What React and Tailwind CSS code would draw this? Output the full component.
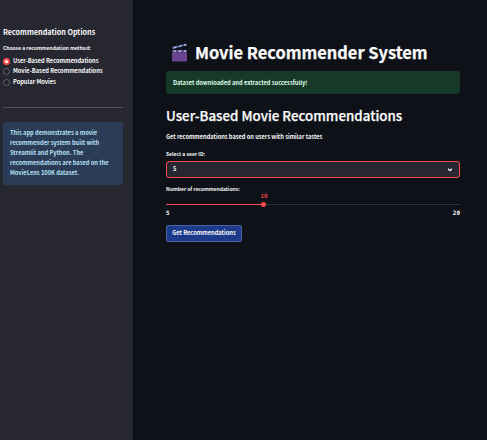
const methods = ["User-Based Recommendations", "Movie-Based Recommendations", "Popular Movies"];

function Clapper() {
  return (
    <svg viewBox="0 0 18 20" className="ml-[5px] h-5 w-[18px] shrink-0">
      <rect x="1" y="7" width="15" height="11.5" fill="#6b4592" />
      <path d="M1 7h15v3H1z" fill="#493e70" />
      <path d="M2.5 7.3h3.2l-1 1.6H2.5zM7.5 7.3h3.5l-1 1.6H7zM13 7.3h2.5l-.5 1.6h-2.5z" fill="#a9a9ec" />
      <path d="M1 3.8 15 .6l.6 2L1.4 6z" fill="#414c74" />
      <path d="m2.5 4.1 3.7-1-1 1.8-3.2.8zM8.4 2.6l3.1-.8-1 1.8-3.3.8zM13.2 1.2 15 .8l.5 1.6-2.8.6z" fill="#a9b2e6" />
    </svg>
  );
}

export default function App() {
  return (
    <div className="flex h-[440px] w-[487px] overflow-hidden bg-[#0e1117] font-['Noto_Sans_CJK_SC','Noto_Sans',sans-serif] text-[5.7px] font-bold text-[#fafafa]">
      <aside className="w-[133px] shrink-0 bg-[#262730] pl-[3px] pr-[10px] pt-[26px]">
        <h2 className="whitespace-nowrap text-[7.2px] font-bold leading-[12px]">Recommendation Options</h2>
        <p className="mt-[5px] whitespace-nowrap text-[5px] leading-[10px]">Choose a recommendation method:</p>
        <div className="mt-[3px] flex flex-col">
          {methods.map((m, i) => (
            <label key={m} className="flex h-[10.5px] items-center gap-[3px] whitespace-nowrap leading-[10px]">
              {i === 0 ? (
                <span className="flex size-[7px] items-center justify-center rounded-full bg-[#ff4b4b]">
                  <span className="size-[3px] rounded-full bg-white" />
                </span>
              ) : (
                <span className="size-[7px] rounded-full border border-[#666770] bg-[#20212a]" />
              )}
              <span className="-mt-px">{m}</span>
            </label>
          ))}
        </div>
        <hr className="mt-[19.5px] border-t border-[#51525a]" />
        <div className="mt-[14px] h-[63px] whitespace-nowrap rounded-[3px] bg-[#2a3c56] pl-[7px] pt-[6px] leading-[10px] text-[#b9e0f5]">
          This app demonstrates a movie<br />recommender system built with<br />Streamlit and Python. The<br />recommendations are based on the<br />MovieLens 100K dataset.
        </div>
      </aside>
      <main className="w-[327px] pl-[33px] pt-[42px]">
        <h1 className="flex h-[22px] items-center gap-[6px] whitespace-nowrap text-[16.4px] font-bold leading-[22px] [-webkit-text-stroke:0.25px]">
          <Clapper /><span className="-mt-[3px]">Movie Recommender System</span>
        </h1>
        <div className="mt-[7px] h-[23px] rounded-[3px] bg-[#173928] pl-[7px] leading-[23px] text-[#dffde9]">Dataset downloaded and extracted successfully!</div>
        <h2 className="mt-[12px] whitespace-nowrap text-[13.35px] font-medium leading-[20px] [-webkit-text-stroke:0.25px]">User-Based Movie Recommendations</h2>
        <p className="mt-[6px] text-[5.65px] leading-[10px]">Get recommendations based on users with similar tastes</p>
        <p className="mt-[7px] text-[5px] leading-[10px]">Select a user ID:</p>
        <div className="mt-[2px] flex h-[17px] items-center justify-between rounded-[3px] border border-[#ff4b4b] bg-[#262730] pl-[6px] pr-[6px]">
          <span>5</span>
          <svg viewBox="0 0 6 4" className="h-[4px] w-[6px]" fill="none" stroke="#fafafa" strokeWidth="1.2"><path d="m1 .8 2 1.8L5 .8" /></svg>
        </div>
        <p className="mt-[6px] text-[5px] leading-[10px]">Number of recommendations:</p>
        <div className="-mt-px h-[11px] w-[196px] text-center font-['DejaVu_Sans_Mono',monospace] text-[6px] font-bold leading-[6px] text-[#e34347]">10</div>
        <div className="flex h-px items-center bg-[#31333c]">
          <div className="h-px w-[95px] bg-[#ff4b4b]" />
          <div className="size-[5px] shrink-0 rounded-full bg-[#ff4b4b]" />
        </div>
        <div className="mt-[4px] flex justify-between font-['DejaVu_Sans_Mono',monospace] text-[6px] leading-[8px]"><span>5</span><span>20</span></div>
        <button className="mt-[8px] block h-[17px] w-[76px] whitespace-nowrap rounded-[2px] border border-[#4a63a8] bg-[#1e3a8a] pb-px leading-[12px]">Get Recommendations</button>
      </main>
    </div>
  );
}
